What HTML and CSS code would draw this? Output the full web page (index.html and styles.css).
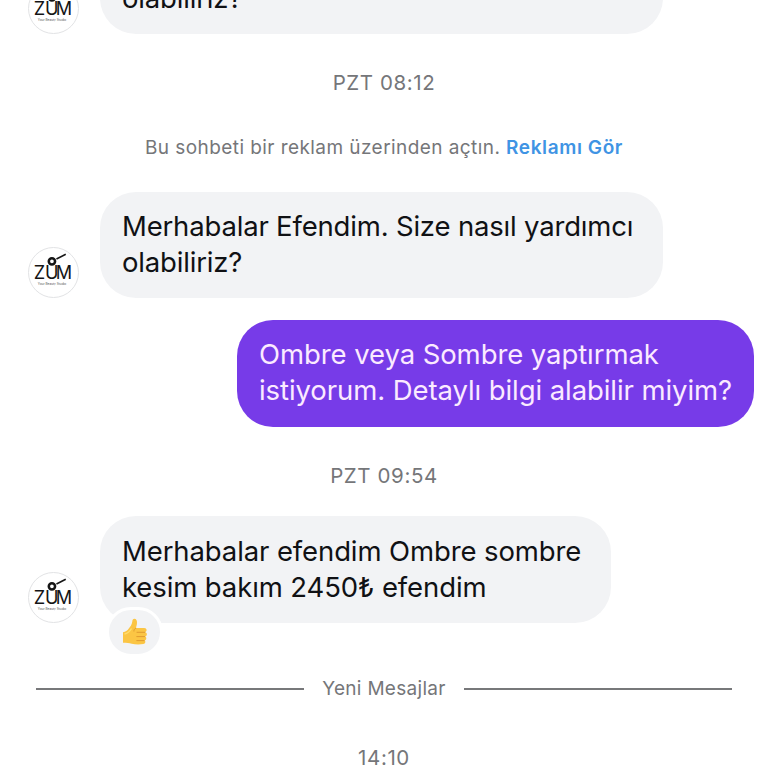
FILE: index.html
```html
<!doctype html>
<html lang="tr">
  <head>
    <meta charset="UTF-8" />
    <meta name="viewport" content="width=device-width, initial-scale=1.0" />
    <title>Sohbet</title>
    <link rel="stylesheet" href="styles.css">
  </head>
  <body>
    <!-- Shared avatar logo -->
    <svg class="sprite" width="0" height="0">
      <symbol id="zum-logo" viewBox="0 0 50 50">
        <text class="logo-name" x="4.8 16.2 27.2" y="31.5">ZUM</text>
        <circle cx="23.4" cy="13.6" r="3.2" fill="#fff" stroke="#151515" stroke-width="2.6" />
        <path d="M28 11.2l9.500-4.800" fill="none" stroke="#151515" stroke-width="1.6" />
        <text class="logo-tagline" x="9" y="37.4" textLength="29" lengthAdjust="spacingAndGlyphs">Your Beauty Studio</text>
      </symbol>
    </svg>

    <main class="chat">
      <div class="row received">
        <div class="avatar"><svg><use href="#zum-logo" /></svg></div>
        <div class="bubble">Merhabalar Efendim. Size nasıl yardımcı<br>olabiliriz?</div>
      </div>

      <div class="timestamp first">PZT 08:12</div>

      <div class="notice">Bu sohbeti bir reklam üzerinden açtın. <a href="#">Reklamı Gör</a></div>

      <div class="row received">
        <div class="avatar"><svg><use href="#zum-logo" /></svg></div>
        <div class="bubble">Merhabalar Efendim. Size nasıl yardımcı<br>olabiliriz?</div>
      </div>

      <div class="row sent">
        <div class="bubble">Ombre veya Sombre yaptırmak<br>istiyorum. Detaylı bilgi alabilir miyim?</div>
      </div>

      <div class="timestamp second">PZT 09:54</div>

      <div class="row received">
        <div class="avatar"><svg><use href="#zum-logo" /></svg></div>
        <div class="bubble short">
          Merhabalar efendim Ombre sombre<br>kesim bakım 2450₺ efendim
          <span class="reaction">
            <svg width="26" height="28" viewBox="0 0 26 28">
              <path d="M1 14.2c2.500-.2 4.300-1.500 5.800-3.700C8.300 8.300 10 6.500 10.300 3.400c.1-1.600.8-2.700 2.100-2.700 1.800 0 2.800 1.900 2.600 4.200-.1 2-.7 3.600-1.200 5.200h8.400c3 0 3.200 3.600.8 4.200 2.600.3 2.500 3.900 0 4.300 2 .5 1.700 3.700-.4 4 1.400.8.900 3.300-1.200 3.500-3.800.6-8.300.6-11.700-.4-2.600-.8-5-1-8.700-1z" fill="#fbc544" />
              <path d="M15 14.300h7.800M14.800 18.600h7.800M14.800 22.600h7.300M13.800 10.100c-1.200.6-2 1.700-1.900 3" fill="none" stroke="#e09a30" stroke-width="1" stroke-linecap="round" />
              <path d="M2.500 16c3-.5 5.300-2.500 7-5.500" fill="none" stroke="#ffdc6c" stroke-width="1.500" />
            </svg>
          </span>
        </div>
      </div>

      <div class="divider"><span>Yeni Mesajlar</span></div>

      <div class="timestamp last">14:10</div>
    </main>
  </body>
</html>
```

FILE: styles.css
```css
* {
  box-sizing: border-box;
  margin: 0;
  padding: 0;
}

body {
  background-color: #fff;
  font-family: Inter, 'Noto Sans', sans-serif;
  overflow: hidden;
}

.sprite {
  display: block;
}

.chat {
  width: 768px;
  height: 768px;
  display: flex;
  flex-direction: column;
  justify-content: flex-end;
  overflow: hidden;
}

.chat > * {
  flex-shrink: 0;
}

.row {
  display: flex;
  align-items: flex-end;
}

.received {
  padding-left: 28px;
  gap: 21px;
}

.sent {
  justify-content: flex-end;
  padding-right: 14px;
  margin-top: 22px;
}

.avatar {
  width: 51px;
  height: 51px;
  border: 1px solid #e2e3e5;
  border-radius: 50%;
}

.avatar svg {
  display: block;
  width: 49px;
  height: 49px;
}

.logo-name {
  font-family: Inter, sans-serif;
  font-size: 18.5px;
  font-weight: 400;
  fill: #151515;
}

.logo-tagline {
  font-family: Inter, sans-serif;
  font-size: 2.8px;
  fill: #555;
}

.bubble {
  position: relative;
  width: 563px;
  height: 106px;
  padding: 16px 22px;
  border-radius: 36px;
  background-color: #f2f3f5;
  color: #101114;
  font-size: 27.5px;
  line-height: 36px;
  letter-spacing: -0.18px;
  white-space: nowrap;
}

.bubble.short {
  width: 511px;
  height: 107px;
  padding-top: 17px;
  letter-spacing: -0.11px;
}

.sent .bubble {
  width: 517px;
  height: 107px;
  background-color: #773be8;
  color: #fbeaff;
  letter-spacing: -0.08px;
}

.reaction {
  position: absolute;
  left: 6px;
  bottom: -34px;
  width: 57px;
  height: 50px;
  display: flex;
  justify-content: center;
  align-items: center;
  border: 3px solid #fff;
  border-radius: 25px;
  background-color: #f2f3f5;
}

.timestamp,
.notice {
  color: #757679;
  text-align: center;
  line-height: 24px;
}

.timestamp {
  font-size: 20.5px;
  letter-spacing: 0.6px;
}

.first {
  margin-top: 37px;
}

.notice {
  margin: 41px 0 32px;
  font-size: 19px;
  letter-spacing: 0.43px;
}

.notice a {
  color: #3f94e4;
  font-weight: 600;
  letter-spacing: 0.6px;
  text-decoration: none;
}

.second {
  margin: 37px 0 28px;
}

.divider {
  display: flex;
  align-items: center;
  gap: 18px;
  margin: 54px 36px 0;
  color: #757679;
  font-size: 19px;
  line-height: 24px;
  letter-spacing: 0.3px;
}

.divider::before,
.divider::after {
  content: '';
  flex: 1;
  height: 2px;
  background-color: #77787a;
}

.last {
  margin-top: 45px;
  margin-bottom: -2px;
}
```
